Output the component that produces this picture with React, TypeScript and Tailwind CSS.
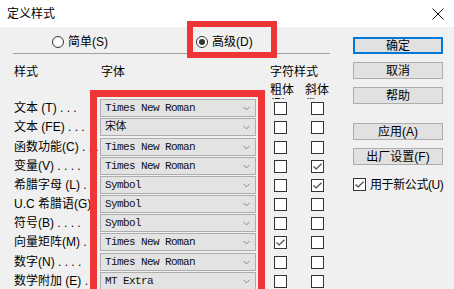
import { ChevronDown } from 'lucide-react';

type Row = { label: string; font: string; bold: boolean; italic: boolean; h: string };

const rows: Row[] = [
  { label: '文本 (T) . . .', font: 'Times New Roman', bold: false, italic: false, h: 'h-[19px]' },
  { label: '文本 (FE) . . .', font: '宋体', bold: false, italic: false, h: 'h-[20px]' },
  { label: '函数功能(C) . . .', font: 'Times New Roman', bold: false, italic: false, h: 'h-[19px]' },
  { label: '变量(V) . . . .', font: 'Times New Roman', bold: false, italic: true, h: 'h-[19px]' },
  { label: '希腊字母 (L) . .', font: 'Symbol', bold: false, italic: true, h: 'h-[19px]' },
  { label: 'U.C 希腊语(G)', font: 'Symbol', bold: false, italic: false, h: 'h-[19px]' },
  { label: '符号(B) . . . .', font: 'Symbol', bold: false, italic: false, h: 'h-[19px]' },
  { label: '向量矩阵(M) . .', font: 'Times New Roman', bold: true, italic: false, h: 'h-[20px]' },
  { label: '数字(N) . . . .', font: 'Times New Roman', bold: false, italic: false, h: 'h-[19px]' },
  { label: '数学附加 (E) . .', font: 'MT Extra', bold: false, italic: false, h: 'h-[19px]' },
];

function Check({ on }: { on: boolean }) {
  return (
    <span className="w-[13px] h-[13px] border border-[#333333] bg-white flex items-center justify-center shrink-0">
      {on && (
        <svg width="9" height="7" viewBox="0 0 9 7" fill="none">
          <path d="M0.5 3.5 L3.2 6 L8.5 0.8" stroke="#4a4a4a" strokeWidth="1.2" />
        </svg>
      )}
    </span>
  );
}

function Radio({ on }: { on: boolean }) {
  return (
    <span className="w-[12px] h-[12px] rounded-full border border-[#333333] bg-white flex items-center justify-center shrink-0">
      {on && <span className="w-[6px] h-[6px] rounded-full bg-[#333333]" />}
    </span>
  );
}

function Btn({ label, primary }: { label: string; primary?: boolean }) {
  return (
    <div className={`h-[17px] w-[90px] flex items-center justify-center bg-[#e1e1e1] text-[12px] leading-none ${primary ? 'border-2 border-[#0078d7]' : 'border border-[#adadad]'}`}>
      {label}
    </div>
  );
}

export default function App() {
  return (
    <div className="relative w-[454px] h-[289px] overflow-hidden bg-[#f0f0f0] text-black font-['Liberation_Sans','Noto_Sans_CJK_SC',sans-serif]">
      <div className="h-[27px] bg-white flex items-center justify-between pl-[7px] pr-[10px]">
        <span className="text-[12px] leading-none">定义样式</span>
        <svg width="12" height="12" viewBox="0 0 12 12" fill="none">
          <path d="M0.5 0.5 L11.5 11.5 M11.5 0.5 L0.5 11.5" stroke="#111" strokeWidth="1" />
        </svg>
      </div>

      <div className="flex">
        <div className="w-[353px] pl-[13px]">
          <div className="mt-[9px] h-[12px] flex items-center text-[12px] leading-none">
            <div className="ml-[39px] w-[144px] flex items-center gap-[4px]">
              <Radio on={false} />
              <span>简单(S)</span>
            </div>
            <div className="flex items-center gap-[4px]">
              <Radio on />
              <span>高级(D)</span>
            </div>
          </div>
          <div className="mt-[5px] h-px w-[317px] bg-[#a0a0a0]" />

          <div className="mt-[12px] h-[12px] flex items-center text-[12px] leading-none">
            <span className="w-[88px] pl-[1px]">样式</span>
            <span className="w-[169px]">字体</span>
            <span>字符样式</span>
          </div>
          <div className="h-[21px] overflow-hidden flex pt-[6px] text-[12px] leading-[13px]">
            <div className="ml-[257px] w-[35px]">粗体<br />(B)</div>
            <div>斜体<br />(I)</div>
          </div>

          {rows.map((r) => (
            <div key={r.label} className={`${r.h} flex items-start`}>
              <span className="w-[87px] pl-[1px] h-[18px] flex items-center whitespace-nowrap overflow-hidden text-[12px] leading-none">
                {r.label}
              </span>
              <div className="w-[156px] h-[18px] border border-[#adadad] bg-[#e3e3e3] flex items-center justify-between pl-[4px] pr-[3px]">
                <span className="text-[11px] tracking-[-0.6px] leading-none text-[#111] font-['Liberation_Mono','Noto_Sans_CJK_SC',monospace]">{r.font}</span>
                <ChevronDown className="w-[11px] h-[11px] text-[#606060]" strokeWidth={1.5} />
              </div>
              <div className="ml-[18px] h-[18px] flex items-center">
                <Check on={r.bold} />
              </div>
              <div className="ml-[24px] h-[18px] flex items-center">
                <Check on={r.italic} />
              </div>
            </div>
          ))}
        </div>

        <div className="w-[90px] pt-[10px] flex flex-col">
          <Btn label="确定" primary />
          <div className="mt-[8px]"><Btn label="取消" /></div>
          <div className="mt-[8px]"><Btn label="帮助" /></div>
          <div className="mt-[19px]"><Btn label="应用(A)" /></div>
          <div className="mt-[8px]"><Btn label="出厂设置(F)" /></div>
          <div className="mt-[13px] flex items-center gap-[4px] text-[12px] leading-none whitespace-nowrap">
            <Check on />
            <span className="tracking-[-0.4px]">用于新公式(U)</span>
          </div>
        </div>
      </div>

      <div className="absolute left-[187px] top-[21px] w-[90px] h-[37px] border-[6px] border-[#ef3535]" />
      <div className="absolute left-[90px] top-[90px] w-[175px] h-[230px] border-[7px] border-[#ef3535]" />
    </div>
  );
}
